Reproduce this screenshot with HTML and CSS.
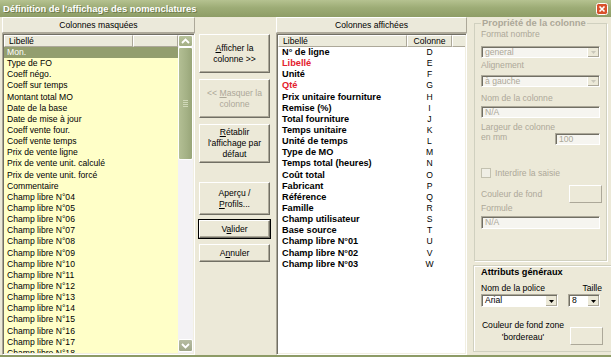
FILE: index.html
```html
<!doctype html>
<html lang="fr">
<head>
    <meta charset="UTF-8">
    <title>Définition de l'affichage des nomenclatures</title>
    <link rel="stylesheet" href="styles.css">
</head>
<body>

<div class="dialog">

    <div class="titlebar">
        <span class="title">Définition de l'affichage des nomenclatures</span>
        <span class="close">
            <svg width="12" height="12" viewBox="0 0 12 12"><rect x="0.5" y="0.5" width="11" height="11" rx="2" fill="#d9512c" stroke="#fff"/><path d="M3.5 3.5l5 5M8.5 3.5l-5 5" stroke="#fff" stroke-width="1.6"/></svg>
        </span>
    </div>

    <div class="main">

        <!-- colonnes masquees -->
        <div class="pane pane-left">
            <div class="pane-head">Colonnes masquées</div>
            <div class="listbox listbox-yellow">
                <div class="list-area">
                    <div class="list-head">
                        <span class="hcell hcell-lib">Libellé</span>
                        <span class="hcell hcell-col"></span>
                    </div>
                    <ul class="rows">
                        <li class="selected">Mon.</li>
                        <li>Type de FO</li>
                        <li>Coeff négo.</li>
                        <li>Coeff sur temps</li>
                        <li>Montant total MO</li>
                        <li>Date de la base</li>
                        <li>Date de mise à jour</li>
                        <li>Coeff vente four.</li>
                        <li>Coeff vente temps</li>
                        <li>Prix de vente ligne</li>
                        <li>Prix de vente unit. calculé</li>
                        <li>Prix de vente unit. forcé</li>
                        <li>Commentaire</li>
                        <li>Champ libre N°04</li>
                        <li>Champ libre N°05</li>
                        <li>Champ libre N°06</li>
                        <li>Champ libre N°07</li>
                        <li>Champ libre N°08</li>
                        <li>Champ libre N°09</li>
                        <li>Champ libre N°10</li>
                        <li>Champ libre N°11</li>
                        <li>Champ libre N°12</li>
                        <li>Champ libre N°13</li>
                        <li>Champ libre N°14</li>
                        <li>Champ libre N°15</li>
                        <li>Champ libre N°16</li>
                        <li>Champ libre N°17</li>
                        <li>Champ libre N°18</li>
                    </ul>
                </div>
                <div class="vscroll">
                    <span class="sb-btn sb-up">
                        <svg width="9" height="6" viewBox="0 0 9 6"><path d="M1 5l3.5-3.5L8 5" fill="none" stroke="#fff" stroke-width="1.8"/></svg>
                    </span>
                    <span class="sb-thumb"><i></i><i></i><i></i><i></i></span>
                    <span class="sb-track"></span>
                    <span class="sb-btn sb-down">
                        <svg width="9" height="6" viewBox="0 0 9 6"><path d="M1 1l3.5 3.5L8 1" fill="none" stroke="#fff" stroke-width="1.8"/></svg>
                    </span>
                </div>
            </div>
        </div>

        <!-- boutons -->
        <div class="actions">
            <button class="btn btn-big"><u>A</u>fficher la<br>colonne &gt;&gt;</button>
            <button class="btn btn-big btn-off">&lt;&lt; <u>M</u>asquer la<br>colonne</button>
            <button class="btn btn-big"><u>R</u>établir<br>l'affichage par<br>défaut</button>
            <button class="btn btn-mid">Aperçu /<br><u>P</u>rofils...</button>
            <button class="btn btn-small btn-default">V<u>a</u>lider</button>
            <button class="btn btn-small">A<u>n</u>nuler</button>
        </div>

        <!-- colonnes affichees -->
        <div class="pane pane-right">
            <div class="pane-head">Colonnes affichées</div>
            <div class="listbox">
                <div class="list-area">
                    <div class="list-head">
                        <span class="hcell hcell-lib">Libellé</span>
                        <span class="hcell hcell-col">Colonne</span>
                        <span class="hcell hcell-fill"></span>
                    </div>
                    <ul class="rows rows-bold">
                        <li><span class="lib">N° de ligne</span><span class="col">D</span></li>
                        <li class="red"><span class="lib">Libellé</span><span class="col">E</span></li>
                        <li><span class="lib">Unité</span><span class="col">F</span></li>
                        <li class="red"><span class="lib">Qté</span><span class="col">G</span></li>
                        <li><span class="lib">Prix unitaire fourniture</span><span class="col">H</span></li>
                        <li><span class="lib">Remise (%)</span><span class="col">I</span></li>
                        <li><span class="lib">Total fourniture</span><span class="col">J</span></li>
                        <li><span class="lib">Temps unitaire</span><span class="col">K</span></li>
                        <li><span class="lib">Unité de temps</span><span class="col">L</span></li>
                        <li><span class="lib">Type de MO</span><span class="col">M</span></li>
                        <li><span class="lib">Temps total (heures)</span><span class="col">N</span></li>
                        <li><span class="lib">Coût total</span><span class="col">O</span></li>
                        <li><span class="lib">Fabricant</span><span class="col">P</span></li>
                        <li><span class="lib">Référence</span><span class="col">Q</span></li>
                        <li><span class="lib">Famille</span><span class="col">R</span></li>
                        <li><span class="lib">Champ utilisateur</span><span class="col">S</span></li>
                        <li><span class="lib">Base source</span><span class="col">T</span></li>
                        <li><span class="lib">Champ libre N°01</span><span class="col">U</span></li>
                        <li><span class="lib">Champ libre N°02</span><span class="col">V</span></li>
                        <li><span class="lib">Champ libre N°03</span><span class="col">W</span></li>
                    </ul>
                </div>
            </div>
        </div>

        <!-- proprietes -->
        <div class="props">
            <fieldset class="group">
                <legend>Propriété de la colonne</legend>
                <div class="lbl lbl-first">Format nombre</div>
                <div class="combo combo-off"><span class="combo-val">general</span><span class="combo-btn"><svg width="5" height="3" viewBox="0 0 5 3"><path d="M0 0h5L2.5 3z" fill="#c9c7ba"/></svg></span></div>
                <div class="lbl lbl-align">Alignement</div>
                <div class="combo combo-off combo-align"><span class="combo-val">à gauche</span><span class="combo-btn"><svg width="5" height="3" viewBox="0 0 5 3"><path d="M0 0h5L2.5 3z" fill="#c9c7ba"/></svg></span></div>
                <div class="lbl lbl-nom">Nom de la colonne</div>
                <div class="field field-nom">N/A</div>
                <div class="row-width">
                    <div class="lbl">Largeur de colonne<br>en mm</div>
                    <div class="field field-num">100</div>
                </div>
                <div class="check-row">
                    <span class="checkbox"></span>
                    <span class="lbl">Interdire la saisie</span>
                </div>
                <div class="color-row">
                    <span class="lbl">Couleur de fond</span>
                    <span class="swatch"></span>
                </div>
                <div class="lbl">Formule</div>
                <div class="field field-formule">N/A</div>
            </fieldset>

            <div class="group2">
                <div class="group2-title">Attributs généraux</div>
                <div class="font-labels">
                    <span>Nom de la police</span>
                    <span>Taille</span>
                </div>
                <div class="font-combos">
                    <div class="combo combo-font"><span class="combo-val">Arial</span><span class="combo-btn"><svg width="5" height="3" viewBox="0 0 5 3"><path d="M0 0h5L2.5 3z" fill="#000"/></svg></span></div>
                    <div class="combo combo-size"><span class="combo-val">8</span><span class="combo-btn"><svg width="5" height="3" viewBox="0 0 5 3"><path d="M0 0h5L2.5 3z" fill="#000"/></svg></span></div>
                </div>
                <div class="zone-row">
                    <span class="zone-lbl">Couleur de fond zone<br>'bordereau'</span>
                    <span class="swatch swatch-zone"></span>
                </div>
            </div>
        </div>

    </div>
</div>

</body>
</html>
```

FILE: styles.css
```css
body{
    margin:0;
    padding:0;
    background:#ece9d8;
    font-family:"Liberation Sans", Arial, sans-serif;
    font-size:8.6px;
    color:#000;
    overflow:hidden;
}
.dialog{
    width:611px;
    height:357px;
    display:flex;
    flex-direction:column;
    box-sizing:border-box;
    border-bottom:2px solid #8d9b66;
}

/* barre de titre */
.titlebar{
    height:17px;
    flex:none;
    display:flex;
    align-items:center;
    justify-content:space-between;
    padding:0 3px 0 3px;
    background:linear-gradient(#b5c290, #9dac76 45%, #8e9d66);
    color:#fff;
    font-weight:bold;
    font-size:9.4px;
}
.title{
    text-shadow:1px 1px 0 #6f7c4c;
}
.close{
    display:flex;
    margin-right:0;
}

.main{
    flex:1;
    display:flex;
    min-height:0;
}

/* listes */
.pane{
    display:flex;
    flex-direction:column;
}
.pane-left{
    width:193px;
    margin-left:2px;
}
.pane-right{
    width:191px;
}
.pane-head{
    height:16px;
    box-sizing:border-box;
    flex:none;
    display:flex;
    align-items:center;
    justify-content:center;
    background:#ebe9da;
    border:1px solid;
    border-color:#fff #aca899 #aca899 #fff;
}
.listbox{
    flex:1;
    min-height:0;
    display:flex;
    padding:1px;
    border:1px solid;
    border-color:#aca899 #fff #fff #aca899;
    box-shadow:inset 1px 1px #716f64, inset -1px -1px #f1efe2;
    background:#fff;
}
.listbox-yellow{
    background:#ffffc8;
}
.list-area{
    flex:1;
    min-width:0;
    overflow:hidden;
}
.list-head{
    display:flex;
    height:12px;
}
.hcell{
    box-sizing:border-box;
    height:12px;
    line-height:10px;
    padding-left:4px;
    background:#ebeadb;
    border:1px solid;
    border-color:#fff #aca899 #aca899 #fff;
    white-space:nowrap;
}
.hcell-lib{
    width:129px;
}
.pane-left .hcell-col{
    flex:1;
}
.pane-right .hcell-col{
    width:45px;
    padding:0;
    text-align:center;
}
.hcell-fill{
    flex:1;
    border-right:none;
}
.rows{
    list-style:none;
    margin:0;
    padding:0;
}
.rows li{
    height:11.15px;
    line-height:11.15px;
    padding-left:3px;
    white-space:nowrap;
}
.rows li.selected{
    background:#939e6e;
    color:#fff;
}
.rows-bold{
    font-weight:bold;
    font-size:9.2px;
}
.rows-bold li{
    display:flex;
    padding-left:4px;
}
.rows-bold .lib{
    width:125px;
}
.rows-bold .col{
    width:45px;
    text-align:center;
    font-weight:normal;
    font-size:8.6px;
}
.rows-bold li.red .lib{
    color:#e3202d;
}

/* ascenseur */
.vscroll{
    width:15px;
    flex:none;
    display:flex;
    flex-direction:column;
    background:#f3f2f4;
}
.sb-btn{
    flex:none;
    display:flex;
    align-items:center;
    justify-content:center;
    box-sizing:border-box;
    border:1px solid #fff;
    border-radius:2px;
    background:linear-gradient(#b8c39b, #a3ae84);
}
.sb-up{
    height:12px;
}
.sb-down{
    height:13px;
    margin-bottom:1px;
    background:linear-gradient(#b6bca2, #a1a88a);
}
.sb-thumb{
    flex:none;
    height:113px;
    box-sizing:border-box;
    border:1px solid #fff;
    border-radius:2px;
    background:linear-gradient(90deg, #b3bf94, #a4b185 60%, #98a578);
    display:flex;
    flex-direction:column;
    align-items:center;
    justify-content:center;
    gap:1px;
}
.sb-thumb i{
    display:block;
    width:5px;
    height:1px;
    background:#d0d8b8;
}
.sb-track{
    flex:1;
}

/* boutons du milieu */
.actions{
    width:71px;
    padding:17px 6px 0 4px;
    display:flex;
    flex-direction:column;
}
.btn{
    flex:none;
    width:71px;
    margin:0 0 6px 0;
    padding:0;
    font:inherit;
    line-height:11px;
    color:#000;
    background:#ece9d8;
    border:1px solid;
    border-color:#fff #716f64 #716f64 #fff;
    box-shadow:inset -1px -1px #aca899;
}
.btn-big{
    height:39px;
}
.btn-mid{
    height:33px;
    margin-top:13px;
    margin-bottom:5px;
}
.btn-small{
    height:18px;
}
.btn-off{
    color:#aca899;
}
.btn-default{
    outline:1px solid #000;
    outline-offset:0;
}

/* proprietes */
.props{
    width:144px;
    display:flex;
    flex-direction:column;
}
.group{
    height:243px;
    box-sizing:border-box;
    margin:1px 4px 0 7px;
    padding:0 6px;
    border:1px solid #d0d0bf;
    box-shadow:1px 1px 0 #fff;
    color:#aca899;
    min-width:0;
}
.group legend{
    padding:0 1px;
    font-weight:bold;
    font-size:9.4px;
    line-height:10px;
    color:#aca899;
}
.lbl{
    line-height:10px;
    white-space:nowrap;
}
.lbl-first{
    margin-top:1px;
}
.lbl-align{
    margin-top:2px;
}
.lbl-nom{
    margin-top:6px;
}
.combo{
    height:12px;
    box-sizing:border-box;
    display:flex;
    border:1px solid;
    border-color:#aca899 #fff #fff #aca899;
    box-shadow:inset 1px 1px #716f64;
    background:#fff;
    color:#000;
}
.combo-off{
    margin-top:7px;
    background:#f6f5f0;
    color:#aca899;
}
.combo-off.combo-align{
    margin-top:5px;
}
.combo-val{
    flex:1;
    padding-left:3px;
    line-height:11px;
}
.combo-btn{
    width:11px;
    margin:1px 0 0 0;
    display:flex;
    align-items:center;
    justify-content:center;
    background:#ece9d8;
    border-left:1px solid #fff;
    box-shadow:inset -1px -1px #aca899;
}
.field{
    height:12px;
    box-sizing:border-box;
    padding-left:3px;
    line-height:11px;
    border:1px solid;
    border-color:#aca899 #fff #fff #aca899;
    box-shadow:inset 1px 1px #716f64;
    background:#f6f5f0;
}
.field-nom{
    margin-top:3px;
}
.row-width{
    margin-top:4px;
    display:flex;
    justify-content:space-between;
    align-items:flex-start;
}
.field-num{
    width:55px;
    margin-top:11px;
}
.check-row{
    margin-top:23px;
    display:flex;
    align-items:center;
    gap:4px;
    height:10px;
}
.checkbox{
    width:8px;
    height:8px;
    border:1px solid #c3c1b0;
    background:#f0efe6;
}
.color-row{
    margin-top:7px;
    display:flex;
    align-items:center;
    justify-content:space-between;
    margin-right:-2px;
}
.swatch{
    width:33px;
    height:18px;
    flex:none;
    box-sizing:border-box;
    background:#ece9d8;
    border:1px solid;
    border-color:#fff #aca899 #aca899 #fff;
}
.field-formule{
    margin-top:3px;
    height:13px;
}

.group2{
    height:87px;
    box-sizing:border-box;
    margin:4px 0 0 6px;
    padding:1px 9px 0 7px;
    border:1px solid #d0d0bf;
    border-right:none;
    box-shadow:inset 1px 1px 0 #fff;
}
.group2-title{
    font-weight:bold;
    font-size:9.2px;
    line-height:10px;
}
.font-labels{
    margin-top:6px;
    display:flex;
    justify-content:space-between;
    line-height:10px;
}
.font-combos{
    margin-top:1px;
    display:flex;
    justify-content:space-between;
}
.combo-font{
    width:77px;
    height:13px;
}
.combo-size{
    width:32px;
    height:13px;
    margin-right:2px;
}
.zone-row{
    margin-top:12px;
    display:flex;
    justify-content:space-between;
    align-items:flex-start;
}
.zone-lbl{
    width:84px;
    line-height:12px;
    text-align:center;
    white-space:nowrap;
}
.swatch-zone{
    margin-top:8px;
    margin-right:-1px;
}
```
